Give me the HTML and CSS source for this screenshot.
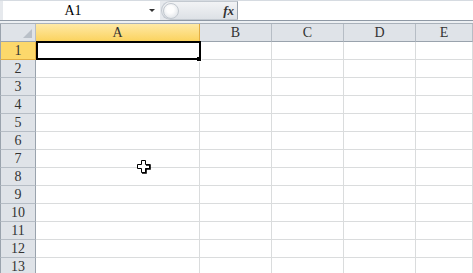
FILE: index.html
```html
<!DOCTYPE html>
<html lang="en">
<head>
    <meta charset="UTF-8">
    <title>Book1</title>
    <link rel="stylesheet" href="styles.css">
</head>
<body>
    <div class="formula-bar">
        <div class="name-box">
            <span class="name-text">A1</span>
            <span class="name-arrow"></span>
        </div>
        <div class="fx-pill">
            <span class="pill-knob"></span>
            <span class="fx">fx</span>
        </div>
        <div class="formula-input"></div>
    </div>
    <div class="strip"></div>

    <div class="sheet">
        <div class="corner"><span class="corner-tri"></span></div>
        <div class="col-head active">A</div>
        <div class="col-head">B</div>
        <div class="col-head">C</div>
        <div class="col-head">D</div>
        <div class="col-head">E</div>

        <div class="row-head active">1</div><div class="cell"></div><div class="cell"></div><div class="cell"></div><div class="cell"></div><div class="cell"></div>
        <div class="row-head">2</div><div class="cell"></div><div class="cell"></div><div class="cell"></div><div class="cell"></div><div class="cell"></div>
        <div class="row-head">3</div><div class="cell"></div><div class="cell"></div><div class="cell"></div><div class="cell"></div><div class="cell"></div>
        <div class="row-head">4</div><div class="cell"></div><div class="cell"></div><div class="cell"></div><div class="cell"></div><div class="cell"></div>
        <div class="row-head">5</div><div class="cell"></div><div class="cell"></div><div class="cell"></div><div class="cell"></div><div class="cell"></div>
        <div class="row-head">6</div><div class="cell"></div><div class="cell"></div><div class="cell"></div><div class="cell"></div><div class="cell"></div>
        <div class="row-head">7</div><div class="cell"></div><div class="cell"></div><div class="cell"></div><div class="cell"></div><div class="cell"></div>
        <div class="row-head">8</div><div class="cell"></div><div class="cell"></div><div class="cell"></div><div class="cell"></div><div class="cell"></div>
        <div class="row-head">9</div><div class="cell"></div><div class="cell"></div><div class="cell"></div><div class="cell"></div><div class="cell"></div>
        <div class="row-head">10</div><div class="cell"></div><div class="cell"></div><div class="cell"></div><div class="cell"></div><div class="cell"></div>
        <div class="row-head">11</div><div class="cell"></div><div class="cell"></div><div class="cell"></div><div class="cell"></div><div class="cell"></div>
        <div class="row-head">12</div><div class="cell"></div><div class="cell"></div><div class="cell"></div><div class="cell"></div><div class="cell"></div>
        <div class="row-head">13</div><div class="cell"></div><div class="cell"></div><div class="cell"></div><div class="cell"></div><div class="cell"></div>

        <div class="selection"></div>
        <div class="fill-handle"></div>
        <svg class="cursor" width="14" height="14" viewBox="0 0 14 14">
            <path d="M4.5 0.5h4v4h4v4h-4v4h-4v-4h-4v-4h4z" fill="#fff" stroke="#000" stroke-width="1"/>
            <path d="M9 5h4v4h-4v4h-4" fill="none" stroke="#000" stroke-width="1.6"/>
        </svg>
    </div>
</body>
</html>
```

FILE: styles.css
```css
body {
    margin: 0;
    width: 473px;
    height: 273px;
    overflow: hidden;
    background: #fff;
    font-family: "Liberation Serif", "DejaVu Serif", serif;
    font-size: 14px;
    color: #222;
}

/* formula bar */
.formula-bar {
    display: flex;
    height: 21px;
    padding-left: 3px;
    background: #e6e9ed;
    border-top: 1px solid #d6dbe1;
    border-bottom: 1px solid #8f99a5;
    box-sizing: border-box;
}

.name-box {
    display: flex;
    align-items: center;
    width: 157px;
    background: #fff;
}

.name-text {
    width: 140px;
    text-align: center;
    font-size: 14px;
    color: #000;
}

.name-arrow {
    margin-left: 6px;
    width: 0;
    height: 0;
    border-left: 3px solid transparent;
    border-right: 3px solid transparent;
    border-top: 3px solid #333;
}

.fx-pill {
    display: flex;
    align-items: center;
    justify-content: space-between;
    width: 77px;
    margin-left: 1px;
    padding: 0 3px 0 1px;
    box-sizing: border-box;
    background: linear-gradient(#f2f3f5, #dde1e6);
    border: 1px solid #c3c9d0;
    border-right: 1px solid #9aa3ad;
    border-radius: 10px 0 0 10px;
}

.pill-knob {
    width: 16px;
    height: 16px;
    border-radius: 50%;
    background: radial-gradient(circle at 45% 40%, #fdfdfd 30%, #d5dae0);
    border: 1px solid #c2c8cf;
    box-sizing: border-box;
}

.fx {
    font-style: italic;
    font-weight: bold;
    font-size: 13px;
    color: #333;
}

.formula-input {
    flex: 1;
    background: #fff;
}

.strip {
    height: 3px;
    background: #edf0f3;
    border-bottom: 1px solid #a9b1ba;
    box-sizing: border-box;
}

/* sheet grid */
.sheet {
    position: relative;
    display: grid;
    grid-template-columns: 36px 164px 72px 72px 72px 1fr;
    grid-auto-rows: 18px;
}

.sheet > div {
    box-sizing: border-box;
}

.cell {
    border-right: 1px solid #dadcdd;
    border-bottom: 1px solid #dadcdd;
}

.corner,
.col-head,
.row-head {
    background: #dfe3e8;
    text-align: center;
    line-height: 18px;
    color: #333;
}

.corner {
    position: relative;
    border-left: 1px solid #9aa3ad;
    border-right: 1px solid #b6bdc5;
    border-bottom: 1px solid #9aa3ad;
}

.corner-tri {
    position: absolute;
    right: 3px;
    bottom: 3px;
    width: 0;
    height: 0;
    border-left: 9px solid transparent;
    border-bottom: 9px solid #b9c0c8;
}

.col-head {
    border-right: 1px solid #b6bdc5;
    border-bottom: 1px solid #9aa3ad;
}

.row-head {
    border-left: 1px solid #9aa3ad;
    border-right: 1px solid #9aa3ad;
    border-bottom: 1px solid #b6bdc5;
}

.col-head.active {
    background: linear-gradient(#fee9a6, #fbd35f);
    border-right-color: #e2ad42;
    border-bottom-color: #e2ad42;
}

.row-head.active {
    background: #fcd86b;
    border-right-color: #e2ad42;
    border-bottom-color: #e2ad42;
}

.selection {
    position: absolute;
    left: 36px;
    top: 17px;
    width: 165px;
    height: 19px;
    border: 2px solid #000;
}

.fill-handle {
    position: absolute;
    left: 197px;
    top: 33px;
    width: 5px;
    height: 5px;
    background: #000;
    border: 1px solid #fff;
    border-left: none;
    border-top: none;
}

.cursor {
    position: absolute;
    left: 137px;
    top: 136px;
}
```
